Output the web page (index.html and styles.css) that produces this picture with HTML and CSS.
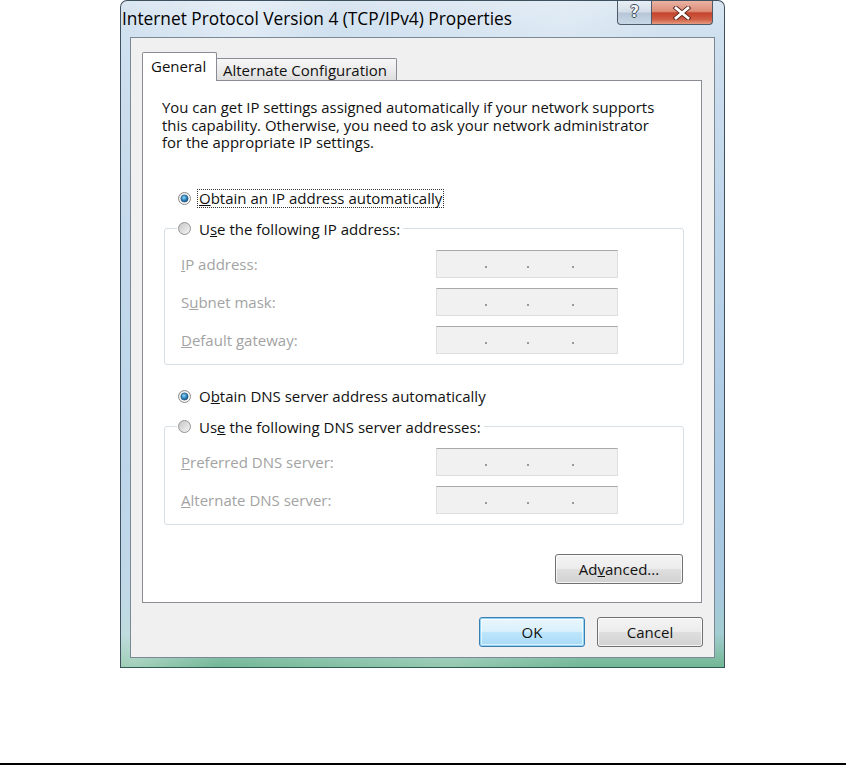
FILE: index.html
```html
<!DOCTYPE html>
<html>
<head>
<meta charset="utf-8">
<title>Internet Protocol Version 4 (TCP/IPv4) Properties</title>
<link rel="stylesheet" href="styles.css">
</head>
<body>
<svg class="defs" width="0" height="0" aria-hidden="true">
  <defs>
    <linearGradient id="rfill" x1="0" y1="0" x2="1" y2="1">
      <stop offset="0" stop-color="#c4c4c4"/>
      <stop offset="1" stop-color="#f7f7f7"/>
    </linearGradient>
    <linearGradient id="rfillOn" x1="0" y1="0" x2="1" y2="1">
      <stop offset="0" stop-color="#e6e6e6"/>
      <stop offset="1" stop-color="#fdfdfd"/>
    </linearGradient>
    <radialGradient id="rdot" cx="0.42" cy="0.38" r="0.7">
      <stop offset="0" stop-color="#9ad8f7"/>
      <stop offset="0.45" stop-color="#3790c9"/>
      <stop offset="1" stop-color="#0f3f6c"/>
    </radialGradient>
  </defs>
</svg>
<div class="page">
  <div class="window">
    <div class="titlebar">
      <span class="title">Internet Protocol Version 4 (TCP/IPv4) Properties</span>
      <div class="caption">
        <div class="cbtn help"><span>?</span></div>
        <div class="cbtn close">
          <svg width="20" height="14" viewBox="0 0 20 14">
            <path d="M4 2 L16 12 M16 2 L4 12" stroke="#5b2318" stroke-width="4.6" stroke-linecap="square" fill="none"/>
            <path d="M4 2 L16 12 M16 2 L4 12" stroke="#ffffff" stroke-width="2.8" stroke-linecap="square" fill="none"/>
          </svg>
        </div>
      </div>
    </div>
    <div class="client">
      <div class="tabs">
        <div class="tab active">General</div>
        <div class="tab">Alternate Configuration</div>
      </div>
      <div class="panel">
        <div class="intro">
          <div class="line">You can get IP settings assigned automatically if your network supports</div>
          <div class="line">this capability. Otherwise, you need to ask your network administrator</div>
          <div class="line">for the appropriate IP settings.</div>
        </div>
        <div class="opts">
          <div class="radio-row r1">
            <svg class="radio" width="13" height="13" viewBox="0 0 13 13"><circle cx="6.5" cy="6.5" r="6" fill="url(#rfillOn)" stroke="#8b8b8b"/><circle cx="6.5" cy="6.5" r="3.6" fill="url(#rdot)" stroke="#1d4f7a" stroke-width="0.6"/></svg>
            <span class="focus"><u>O</u>btain an IP address automatically</span>
          </div>
          <fieldset class="group">
            <legend>
              <svg class="radio" width="13" height="13" viewBox="0 0 13 13"><circle cx="6.5" cy="6.5" r="6" fill="url(#rfill)" stroke="#959595"/></svg>
              <span>U<u>s</u>e the following IP address:</span>
            </legend>
            <div class="rows">
              <span class="lbl"><u>I</u>P address:</span>
              <div class="ipbox"><i class="dot d1"></i><i class="dot d2"></i><i class="dot d3"></i></div>
              <span class="lbl">S<u>u</u>bnet mask:</span>
              <div class="ipbox"><i class="dot d1"></i><i class="dot d2"></i><i class="dot d3"></i></div>
              <span class="lbl"><u>D</u>efault gateway:</span>
              <div class="ipbox"><i class="dot d1"></i><i class="dot d2"></i><i class="dot d3"></i></div>
            </div>
          </fieldset>
          <div class="radio-row r2">
            <svg class="radio" width="13" height="13" viewBox="0 0 13 13"><circle cx="6.5" cy="6.5" r="6" fill="url(#rfillOn)" stroke="#8b8b8b"/><circle cx="6.5" cy="6.5" r="3.6" fill="url(#rdot)" stroke="#1d4f7a" stroke-width="0.6"/></svg>
            <span class="plain">O<u>b</u>tain DNS server address automatically</span>
          </div>
          <fieldset class="group">
            <legend>
              <svg class="radio" width="13" height="13" viewBox="0 0 13 13"><circle cx="6.5" cy="6.5" r="6" fill="url(#rfill)" stroke="#959595"/></svg>
              <span>Us<u>e</u> the following DNS server addresses:</span>
            </legend>
            <div class="rows">
              <span class="lbl"><u>P</u>referred DNS server:</span>
              <div class="ipbox"><i class="dot d1"></i><i class="dot d2"></i><i class="dot d3"></i></div>
              <span class="lbl"><u>A</u>lternate DNS server:</span>
              <div class="ipbox"><i class="dot d1"></i><i class="dot d2"></i><i class="dot d3"></i></div>
            </div>
          </fieldset>
          <div class="adv-row">
            <button class="btn adv">Ad<u>v</u>anced...</button>
          </div>
        </div>
      </div>
      <div class="actions">
        <button class="btn ok">OK</button>
        <button class="btn">Cancel</button>
      </div>
    </div>
  </div>
  <div class="rule"></div>
</div>
</body>
</html>
```
FILE: styles.css
```css
html, body {
  margin: 0;
  padding: 0;
  background: #ffffff;
}

body {
  font-family: "Open Sans", "Noto Sans", "DejaVu Sans", sans-serif;
  font-size: 15px;
  color: #111;
}

.defs {
  display: block;
  width: 0;
  height: 0;
  overflow: hidden;
}

.page {
  width: 846px;
  height: 765px;
  display: flex;
  flex-direction: column;
}

.window {
  margin-left: 120px;
  width: 605px;
  height: 668px;
  box-sizing: border-box;
  border: 1px solid #3f505f;
  border-bottom-color: #2f5a55;
  border-radius: 7px 7px 0 0;
  padding: 0 9px 9px;
  display: flex;
  flex-direction: column;
  background:
    linear-gradient(100deg, rgba(255,255,255,0) 0%, rgba(255,255,255,0.35) 18%, rgba(255,255,255,0) 30%, rgba(255,255,255,0.25) 62%, rgba(255,255,255,0) 80%),
    linear-gradient(180deg, #dae6f1 0%, #cfe0ef 5%, #bcd4e9 35%, #abc9e3 70%, #a8c8df 88%, #a3cdd0 95%, #72b794 100%);
}

.titlebar {
  height: 36px;
  margin-left: -8px;
  display: flex;
  justify-content: space-between;
  align-items: flex-start;
}

.title {
  line-height: 36px;
  font-size: 17.3px;
  color: #000;
  white-space: nowrap;
}

.caption {
  display: flex;
  margin-right: 2px;
}

.cbtn {
  height: 24px;
  box-sizing: border-box;
  border: 1px solid #4d5a68;
  border-top: none;
  display: flex;
  align-items: center;
  justify-content: center;
}

.help {
  width: 35px;
  border-radius: 0 0 0 4px;
  background: linear-gradient(180deg, #e9eff5 0%, #d3dde8 48%, #b6c6d6 52%, #c8d8e6 100%);
}

.help span {
  font-family: "DejaVu Sans", sans-serif;
  font-weight: bold;
  font-size: 15px;
  line-height: 1;
  color: #f4f7fa;
  text-shadow: 1px 0 0 #3c4b5a, -1px 0 0 #3c4b5a, 0 1px 0 #3c4b5a, 0 -1px 0 #3c4b5a;
}

.close {
  width: 61px;
  border-left: none;
  border-radius: 0 0 4px 0;
  background: linear-gradient(180deg, #eab3a4 0%, #dc8d79 45%, #c4432c 52%, #cf5e45 80%, #e79c82 100%);
}

.close svg {
  display: block;
}

.client {
  flex: 1;
  background: #f0f0f0;
  border: 1px solid #7b8996;
  padding: 14px 11px 10px 11px;
  display: flex;
  flex-direction: column;
}

.tabs {
  display: flex;
  align-items: flex-end;
  height: 29px;
  margin-bottom: -1px;
  position: relative;
  z-index: 1;
}

.tab {
  box-sizing: border-box;
  border: 1px solid #898c95;
  border-bottom: none;
  display: flex;
  align-items: center;
  white-space: nowrap;
}

.tab.active {
  width: 75px;
  height: 29px;
  background: #ffffff;
  padding-left: 8px;
  padding-bottom: 3px;
  border-radius: 2px 2px 0 0;
}

.tab:not(.active) {
  width: 180px;
  height: 22px;
  margin-bottom: 1px;
  border-left: none;
  padding-left: 6px;
  background: linear-gradient(180deg, #f7f7f7 0%, #ececec 50%, #dedede 100%);
  border-radius: 0 2px 0 0;
}

.panel {
  width: 560px;
  height: 523px;
  box-sizing: border-box;
  border: 1px solid #898c95;
  background: #ffffff;
  padding: 18px 0 0 19px;
}

.intro {
  display: flex;
  flex-direction: column;
  height: 52.5px;
  white-space: nowrap;
}

.intro .line {
  height: 17.5px;
  line-height: 17.5px;
  font-size: 14.9px;
}

.opts {
  margin-left: 2px;
  width: 520px;
  display: flex;
  flex-direction: column;
}

.radio-row {
  display: flex;
  align-items: center;
  height: 19px;
  margin-left: 14px;
  gap: 6px;
}

.radio {
  display: block;
  flex: none;
}

.r1 {
  margin-top: 37px;
}

.r2 {
  margin-top: 22px;
}

.focus {
  border: 1px dotted #333;
  padding: 0 1px;
  line-height: 17px;
}

.plain {
  padding-left: 2px;
  line-height: 17px;
}

.group {
  margin: 12px 0 0 0;
  padding: 0;
  min-width: 0;
  border: 1px solid #d5dfe5;
  border-radius: 3px;
}

.group legend {
  margin-left: 12px;
  padding: 0 3px 0 1px;
  height: 18px;
  display: flex;
  align-items: center;
  gap: 8px;
  line-height: 18px;
}

.rows {
  padding: 12px 0 10px 16px;
  display: grid;
  grid-template-columns: 255px 182px;
  grid-auto-rows: 28px;
  row-gap: 10px;
  align-items: center;
}

.lbl {
  color: #a3a3a3;
}

.ipbox {
  height: 28px;
  box-sizing: border-box;
  border: 1px solid #dedede;
  border-top-color: #a9a9a9;
  background: #f1f1f1;
  display: flex;
  align-items: flex-end;
  padding-bottom: 9px;
}

.dot {
  display: block;
  width: 2px;
  height: 2px;
  background: #9a9a9a;
}

.d1 { margin-left: 48px; }
.d2 { margin-left: 40px; }
.d3 { margin-left: 43px; }

.adv-row {
  display: flex;
  justify-content: flex-end;
  margin-top: 29px;
  padding-right: 1px;
}

.btn {
  font-family: inherit;
  font-size: 15px;
  color: #111;
  height: 30px;
  width: 106px;
  box-sizing: border-box;
  border: 1px solid #707070;
  border-radius: 3px;
  padding: 0;
  background: linear-gradient(180deg, #f4f4f4 0%, #ececec 48%, #dedede 52%, #d2d2d2 100%);
  box-shadow: inset 0 0 0 1px rgba(255,255,255,0.75);
}

.btn.adv {
  width: 128px;
}

.btn.ok {
  border-color: #3a7eb2;
  background: linear-gradient(180deg, #eaf6fd 0%, #d9f0fc 48%, #bee6fd 52%, #a7d9f5 100%);
  box-shadow: inset 0 0 0 1px #8fd2f4, inset 0 0 0 2px rgba(255,255,255,0.6);
}

.actions {
  margin-top: 14px;
  display: flex;
  justify-content: flex-end;
  gap: 12px;
}

.rule {
  margin-top: auto;
  height: 2px;
  background: #000;
}
```
